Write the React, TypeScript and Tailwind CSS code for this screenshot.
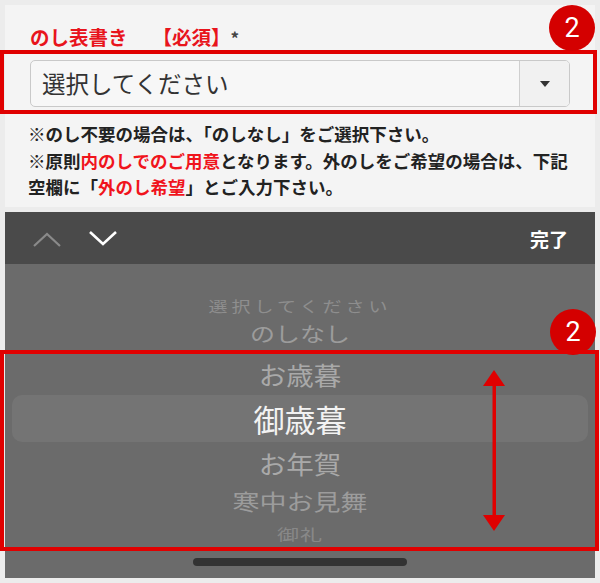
import React from "react";

const jp = "font-['Noto_Sans_CJK_JP','Noto_Sans',sans-serif]";

function Badge({ className }: { className: string }) {
  return (
    <div className={`absolute w-[46px] h-[46px] rounded-full bg-[#d40000] flex items-center justify-center text-white text-[27px] leading-none font-['Roboto',sans-serif] ${className}`}>
      2
    </div>
  );
}

function PickerRow({ label, h, className, inner }: { label: string; h: string; className: string; inner?: string }) {
  return (
    <div className={`flex items-center justify-center ${h}`}>
      <span className={`inline-block leading-none whitespace-nowrap ${className} ${inner ?? ""}`}>{label}</span>
    </div>
  );
}

export default function App() {
  return (
    <div className={`relative w-[600px] h-[583px] bg-[#ececec] overflow-hidden ${jp}`}>
      <div className="flex flex-col gap-[5px] px-[5px] pt-[5px]">
        {/* form field */}
        <section className="h-[202px] bg-[#f4f4f4] pl-[25px] pt-[20px]">
          <div className="flex items-center h-[24px] text-[19.5px] font-bold leading-none">
            <span className="text-[#e8141c]">のし表書き</span>
            <span className="ml-[25px] text-[#e8141c]">【必須】</span>
            <span className="ml-0 text-[#444] text-[17px]">*</span>
          </div>
          <div className="mt-[11px] w-[540px] h-[47px] flex rounded-[5px] border border-[#c9c9c9] bg-[#f7f7f7] overflow-hidden">
            <div className="flex-1 flex items-center pl-[11px] text-[23.5px] text-[#333] leading-none">選択してください</div>
            <div className="w-[50px] border-l border-[#cfcfcf] bg-[#f1f1f1] flex items-center justify-center">
              <svg width="10" height="6" viewBox="0 0 10 6"><path d="M0 0h10L5 6z" fill="#333" /></svg>
            </div>
          </div>
          <p className="mt-[14px] -ml-[2px] text-[17.5px] leading-[26.5px] font-bold text-[#222] whitespace-nowrap">
            ※のし不要の場合は、「のしなし」をご選択下さい。<br />
            ※原則<span className="text-[#f0141c]">内のしでのご用意</span>となります。外のしをご希望の場合は、下記<br />
            空欄に「<span className="text-[#f0141c]">外のし希望</span>」とご入力下さい。
          </p>
        </section>

        {/* native picker sheet */}
        <section className="flex flex-col">
          <div className="h-[52px] bg-[#4a4a4a] flex items-center pl-[27px] pr-[27px]">
            <svg width="30" height="16" viewBox="0 0 30 16" className="mt-[4px]">
              <path d="M2 14 L15 2 L28 14" fill="none" stroke="#8a8a8a" strokeWidth="2.2" />
            </svg>
            <svg width="30" height="16" viewBox="0 0 30 16" className="ml-[26px]">
              <path d="M2 2 L15 14 L28 2" fill="none" stroke="#fff" strokeWidth="2.6" />
            </svg>
            <span className="ml-auto text-white text-[19px] font-bold leading-none">完了</span>
          </div>
          <div className="h-[314px] bg-[#6b6b6b] flex flex-col pt-[30px]">
            <PickerRow label="選択してください" h="h-[22px]" className="text-[19px] tracking-[4px] text-[#8e8e8e]" inner="scale-y-[0.8]" />
            <PickerRow label="のしなし" h="h-[34px]" className="text-[25px] text-[#9c9c9c]" inner="scale-y-[0.8]" />
            <PickerRow label="お歳暮" h="h-[45px]" className="text-[27.5px] text-[#a9a9a9] pt-[4px]" inner="scale-y-[0.9]" />
            <div className="mx-[7px] h-[47px] rounded-[10px] bg-[#747474] flex items-center justify-center">
              <span className="text-[31px] leading-none text-[#f2f2f2]">御歳暮</span>
            </div>
            <PickerRow label="お年賀" h="h-[44px]" className="text-[27.5px] text-[#a9a9a9]" inner="scale-y-[0.9]" />
            <PickerRow label="寒中お見舞" h="h-[28px]" className="text-[27px] text-[#9c9c9c]" inner="scale-y-[0.8]" />
            <PickerRow label="御礼" h="h-[38px]" className="text-[22px] tracking-[1px] text-[#888]" inner="scale-y-[0.68]" />
            <div className="mt-[6px] mx-auto w-[214px] h-[8px] rounded-full bg-[#333]" />
          </div>
        </section>
      </div>

      {/* callouts */}
      <div className="absolute left-0 top-[50px] w-[597px] h-[64px] border-[4px] border-[#e00000]" />
      <Badge className="left-[549px] top-[5px]" />
      <Badge className="left-[550px] top-[309px]" />
      <div className="absolute left-0 top-[350px] w-[599px] h-[201px] border-[4px] border-[#e00000]" />
      <svg className="absolute left-[482px] top-[370px]" width="24" height="161" viewBox="0 0 24 161">
        <path d="M12 0 L23 16 L1 16 Z M12 161 L23 145 L1 145 Z" fill="#e00000" />
        <rect x="10.5" y="14" width="3.5" height="133" fill="#e00000" />
      </svg>
    </div>
  );
}
